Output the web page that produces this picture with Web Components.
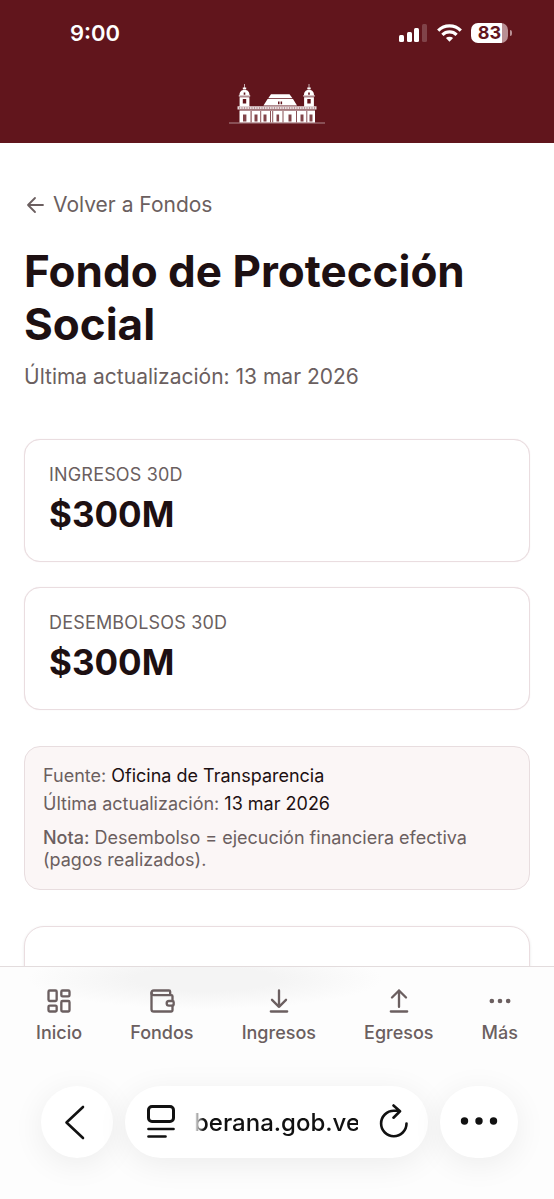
<!DOCTYPE html>
<html lang="es">
<head>
<meta charset="utf-8">
<meta name="viewport" content="width=device-width, initial-scale=1">
<title>Fondo de Protección Social</title>
<style>
  body { margin: 0; font-family: Inter, "Liberation Sans", sans-serif; color: #1d1012; background: #fff; }
</style>
</head>
<body>
<fund-page></fund-page>

<script>
const define = (name, html) => {
  const template = document.createElement('template');
  template.innerHTML = html;
  customElements.define(name, class extends HTMLElement {
    constructor() {
      super();
      this.attachShadow({ mode: 'open' }).append(template.content.cloneNode(true));
    }
  });
};

define('status-bar', `
  <style>
    :host { display: flex; justify-content: space-between; align-items: center; height: 66px; padding: 0 42px 0 70px; color: #fff; }
    time { font-size: 22px; line-height: 28px; font-weight: 600; }
    .right { display: flex; align-items: center; gap: 9px; }
    .battery { display: flex; align-items: center; gap: 2px; }
    .level { width: 37px; height: 20px; border-radius: 7px; font-size: 18px; line-height: 20px; font-weight: 700; text-align: center; color: #61151c; background: linear-gradient(90deg, #fff 83%, #b98f94 83%); }
    .cap { width: 2px; height: 6px; border-radius: 0 2px 2px 0; background: #b98f94; }
    svg { display: block; }
  </style>
  <time>9:00</time>
  <div class="right">
    <svg width="29" height="20" viewBox="0 0 29 20" fill="#fff" aria-hidden="true">
      <rect x="0" y="12" width="5" height="7" rx="1.5"/><rect x="8" y="9" width="5" height="10" rx="1.5"/>
      <rect x="15" y="5" width="5" height="14" rx="1.5"/><rect x="23" y="1" width="5" height="18" rx="1.5" opacity=".2"/>
    </svg>
    <svg width="25" height="20" viewBox="0 0 25 20" fill="none" stroke="#fff" stroke-width="3.2" aria-hidden="true">
      <path d="M1.2 7.6a16 16 0 0 1 22.6 0M5.4 11.8a10 10 0 0 1 14.2 0"/>
      <path d="M12.5 18.8l-3.6-3.7a5.2 5.2 0 0 1 7.2 0z" fill="#fff" stroke="none"/>
    </svg>
    <div class="battery"><div class="level">83</div><div class="cap"></div></div>
  </div>
`);

define('palace-logo', `
  <style>:host { display: block; } svg { display: block; }</style>
  <svg width="96" height="40" viewBox="0 0 96 40" fill="#fff" role="img" aria-label="Palacio">
    <g id="tower">
      <path d="M15.100 0h.8v4h-.8z" opacity=".8"/>
      <path d="M13.800 3.500h3.400v1.700h-3.400zM10.500 11c0-3.200 2-5.300 5-5.300s5 2.100 5 5.300zM9.800 11.300h11.400v1.300H9.800zM10.600 13.200h9.800v9.300h-9.800z"/>
      <path d="M14.700 10.800v-2.300h1.600v2.300zM13.800 15h3.400v4.500h-3.400z" fill="#61151c"/>
    </g>
    <use href="#tower" x="64.500"/>
    <path d="M42 10.300h18.500l3 4H39.200zM38.600 15h25.400l4 6.500H34.500z"/>
    <path d="M49 17.500h1.500v2.700H49zM51.600 17.500h1.500v2.700h-1.500z" fill="#61151c"/>
    <path d="M8.500 22.300h79v3.200h-79z" opacity=".85"/>
    <path d="M10 24h76" stroke="#61151c" stroke-width="1" stroke-dasharray="1 1.500" opacity=".7"/>
    <path d="M10.500 26.500h75.500v12H10.500z"/>
    <g fill="#61151c">
      <path d="M14 30.500h3.400v7H14zM25.500 30.500h3v7h-3zM34.500 30.500h3v7h-3zM47.500 30.500h2.600v7h-2.600zM59.500 30.500h3v7h-3zM71.500 30.500h3v7h-3zM80.500 30.500h3v7h-3z" opacity=".8"/>
      <path d="M21.500 27h1.200v11.500h-1.200zM31.200 27h1v11.500h-1zM41 27h1v11.500h-1zM43.200 27h1v11.500h-1zM53.500 27h1v11.500h-1zM67 27h1v11.500h-1zM77.300 27h1v11.500h-1z" opacity=".75"/>
    </g>
    <path d="M0 38.500h96v.9H0z" opacity=".5"/>
  </svg>
`);

define('site-header', `
  <style>
    :host { display: block; background: #61151c; }
    .brand { display: flex; justify-content: center; padding: 18px 0 19px; }
  </style>
  <status-bar></status-bar>
  <div class="brand"><palace-logo></palace-logo></div>
`);

define('back-link', `
  <style>
    :host { display: flex; }
    a { display: flex; align-items: center; gap: 5px; font-size: 21px; line-height: 28px; color: #6b5f60; text-decoration: none; }
  </style>
  <a href="#fondos">
    <svg width="24" height="24" viewBox="0 0 24 24" fill="none" stroke="currentColor" stroke-width="1.800" stroke-linecap="round" stroke-linejoin="round" aria-hidden="true"><path d="M19 12H4M11 19l-7-7 7-7"/></svg>
    <slot></slot>
  </a>
`);

define('stat-card', `
  <style>
    :host { display: block; border: 1px solid #eadde0; border-radius: 16px; padding: 24px; background: #fff; box-shadow: 0 0 1px #eadde0; }
    .label { font-size: 18px; line-height: 22px; letter-spacing: .01em; text-transform: uppercase; color: #6b5f60; }
    .value { margin-top: 6px; font-size: 35px; line-height: 45px; font-weight: 700; }
  </style>
  <div class="label"><slot name="label"></slot></div>
  <div class="value"><slot></slot></div>
`);

define('source-note', `
  <style>
    :host { display: block; border: 1px solid #e8dddf; border-radius: 16px; padding: 18px; background: #fbf6f6; font-size: 18px; line-height: 22px; color: #6b5f60; }
    p { margin: 0; }
    p + p { margin-top: 6px; }
    p.note { margin-top: 12px; }
    .strong { color: #1d1012; }
    b { font-weight: 500; }
  </style>
  <p>Fuente: <span class="strong">Oficina de Transparencia</span></p>
  <p>Última actualización: <span class="strong">13 mar 2026</span></p>
  <p class="note"><b>Nota:</b> Desembolso = ejecución financiera efectiva (pagos realizados).</p>
`);

define('content-card', `
  <style>:host { display: block; min-height: 240px; border: 1px solid #eadde0; border-radius: 20px; background: #fff; box-shadow: 0 1px 3px rgba(0, 0, 0, .1); }</style>
  <slot></slot>
`);

define('nav-item', `
  <style>
    :host { display: block; }
    a { display: flex; flex-direction: column; align-items: center; gap: 6px; font-size: 18px; line-height: 24px; font-weight: 500; color: #6b5f60; text-decoration: none; }
    ::slotted(svg) { display: block; width: 28px; height: 28px; fill: none; stroke: currentColor; stroke-width: 2; stroke-linecap: round; stroke-linejoin: round; }
  </style>
  <a href="#"><slot name="icon"></slot><span><slot></slot></span></a>
`);

define('tab-bar', `
  <style>
    :host { display: block; border-top: 1px solid #e3dcdd; background: radial-gradient(ellipse 32% 30px at 37% 12px, #f4f4f4 40%, rgba(253, 253, 253, 0)) #fdfdfd; }
    nav { display: flex; justify-content: space-around; padding: 20px 12px 15px; }
  </style>
  <nav>
    <nav-item><svg slot="icon" viewBox="0 0 24 24"><rect x="3" y="3" width="7" height="9" rx="1"/><rect x="14" y="3" width="7" height="5" rx="1"/><rect x="14" y="12" width="7" height="9" rx="1"/><rect x="3" y="16" width="7" height="5" rx="1"/></svg>Inicio</nav-item>
    <nav-item><svg slot="icon" viewBox="0 0 24 24"><path d="M19 7V4a1 1 0 0 0-1-1H5a2 2 0 0 0 0 4h15a1 1 0 0 1 1 1v4h-3a2 2 0 0 0 0 4h3a1 1 0 0 0 1-1v-2a1 1 0 0 0-1-1"/><path d="M3 5v14a2 2 0 0 0 2 2h15a1 1 0 0 0 1-1v-4"/></svg>Fondos</nav-item>
    <nav-item><svg slot="icon" viewBox="0 0 24 24"><path d="M12 17V3M6 11l6 6 6-6M19 21H5"/></svg>Ingresos</nav-item>
    <nav-item><svg slot="icon" viewBox="0 0 24 24"><path d="M18 9l-6-6-6 6M12 3v14M5 21h14"/></svg>Egresos</nav-item>
    <nav-item><svg slot="icon" viewBox="0 0 24 24"><circle cx="12" cy="12" r="1"/><circle cx="19" cy="12" r="1"/><circle cx="5" cy="12" r="1"/></svg>Más</nav-item>
  </nav>
`);

define('browser-bar', `
  <style>
    :host { display: flex; gap: 12px; padding: 26px 36px 41px 41px; background: #fdfdfd; }
    button { display: flex; align-items: center; justify-content: center; padding: 0; border: 0; background: none; color: #111; }
    .round, .address { height: 72px; border-radius: 36px; background: #fff; box-shadow: 0 6px 32px rgba(0, 0, 0, .07); }
    .round { flex: none; width: 72px; }
    .more { width: 78px; }
    .address { flex: 1; min-width: 0; display: flex; align-items: center; padding: 0 18px 0 19px; box-sizing: border-box; }
    .address button { flex: none; }
    input { flex: 1; width: 0; min-width: 0; height: 36px; box-sizing: border-box; margin: 0 18px 0 16px; padding: 0; border: 0; outline: 0; background: none; font: 500 24px/30px Inter, "Liberation Sans", sans-serif; text-align: right; color: #111; -webkit-mask-image: linear-gradient(90deg, transparent, #000 10px); mask-image: linear-gradient(90deg, transparent, #000 10px); }
    svg { display: block; fill: none; stroke: currentColor; stroke-linecap: round; stroke-linejoin: round; }
  </style>
  <button class="round" aria-label="Atrás"><svg width="36" height="36" viewBox="0 0 36 36" stroke-width="2.600"><path d="M24 3L7.500 18.500 24 34"/></svg></button>
  <div class="address">
    <button aria-label="Menú de página"><svg width="34" height="36" viewBox="0 0 34 36" stroke-width="3"><rect x="4.500" y="2.500" width="25" height="15" rx="3.500"/><path d="M4.500 25h25M4.500 32.500h17" stroke-width="2.700"/></svg></button>
    <input aria-label="Dirección" value="berana.gob.ve" readonly>
    <button aria-label="Recargar"><svg width="34" height="36" viewBox="0 0 34 36" stroke-width="2.600"><path d="M30.500 18.500a12.700 12.700 0 1 1-12.700-12.700h5.500M17.500 .500l6.500 5.800-6.500 6.400" transform="translate(0 1)"/></svg></button>
  </div>
  <button class="round more" aria-label="Más opciones"><svg width="40" height="10" viewBox="0 0 40 10"><g fill="currentColor" stroke="none"><circle cx="5.500" cy="4" r="3.700"/><circle cx="20" cy="4" r="3.700"/><circle cx="34.500" cy="4" r="3.700"/></g></svg></button>
`);

define('fund-page', `
  <style>
    :host { display: grid; grid-template: auto minmax(0, 1fr) auto / minmax(0, 1fr); height: 100vh; }
    main { overflow: hidden; padding: 48px 24px 0; }
    h1 { margin: 26px 0 0; font-size: 44px; line-height: 53px; font-weight: 700; }
    .updated { margin: 12px 0 48px; font-size: 21px; line-height: 28px; color: #6b5f60; }
    .stats { display: grid; gap: 25px; }
    source-note, content-card { margin-top: 36px; }
  </style>
  <site-header></site-header>
  <main>
    <back-link>Volver a Fondos</back-link>
    <h1>Fondo de Protección Social</h1>
    <p class="updated">Última actualización: 13 mar 2026</p>
    <div class="stats">
      <stat-card><span slot="label">Ingresos 30d</span>$300M</stat-card>
      <stat-card><span slot="label">Desembolsos 30d</span>$300M</stat-card>
    </div>
    <source-note></source-note>
    <content-card></content-card>
  </main>
  <footer><tab-bar></tab-bar><browser-bar></browser-bar></footer>
`);
</script>
</body>
</html>
